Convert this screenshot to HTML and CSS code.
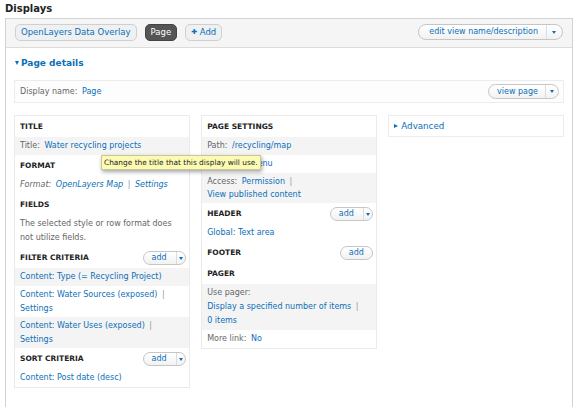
FILE: index.html
```html
<!DOCTYPE html>
<html>
<head>
<meta charset="utf-8">
<link rel="stylesheet" href="styles.css">
</head>
<body>
<h1 class="page-title">Displays</h1>
<div class="panel">
  <div class="tabbar">
    <div class="tabs">
      <a class="tab">OpenLayers Data Overlay</a>
      <a class="tab active">Page</a>
      <a class="tab"><span class="plus">✚</span> Add</a>
    </div>
    <span class="pill pill-lg"><span class="pill-text">edit view name/description</span><span class="pill-caret"><i class="caret"></i></span></span>
  </div>
  <div class="content">
    <div class="details"><i class="tri-down"></i>Page details</div>
    <div class="name-row">
      <span><span class="label">Display name:</span> <a class="link">Page</a></span>
      <span class="pill pill-md"><span class="pill-text">view page</span><span class="pill-caret"><i class="caret"></i></span></span>
    </div>
    <div class="columns">
      <div class="col">
        <div class="sec-head"><span>Title</span></div>
        <div class="row alt"><span class="label">Title:</span> <a class="link">Water recycling projects</a></div>
        <div class="sec-head"><span>Format</span></div>
        <div class="row italic"><span class="label">Format:</span> <a class="link">OpenLayers Map</a> <span class="sep">|</span> <a class="link">Settings</a></div>
        <div class="sec-head"><span>Fields</span></div>
        <div class="row muted">The selected style or row format does not utilize fields.</div>
        <div class="sec-head"><span>Filter criteria</span><span class="pill"><span class="pill-text">add</span><span class="pill-caret"><i class="caret"></i></span></span></div>
        <div class="row alt"><a class="link nw">Content: Type (= Recycling Project)</a></div>
        <div class="row wide"><a class="link nw">Content: Water Sources (exposed)</a> <span class="sep">|</span> <a class="link nw">Settings</a></div>
        <div class="row alt wide"><a class="link nw">Content: Water Uses (exposed)</a> <span class="sep">|</span> <a class="link nw">Settings</a></div>
        <div class="sec-head"><span>Sort criteria</span><span class="pill"><span class="pill-text">add</span><span class="pill-caret"><i class="caret"></i></span></span></div>
        <div class="row"><a class="link nw">Content: Post date (desc)</a></div>
      </div>
      <div class="col">
        <div class="sec-head"><span>Page settings</span></div>
        <div class="row alt"><span class="label">Path:</span> <a class="link">/recycling/map</a></div>
        <div class="row"><span class="label">Menu:</span> <a class="link">No menu</a></div>
        <div class="row alt two"><span class="label">Access:</span> <a class="link nw">Permission</a> <span class="sep">|</span> <a class="link nw">View published content</a></div>
        <div class="sec-head"><span>Header</span><span class="pill"><span class="pill-text">add</span><span class="pill-caret"><i class="caret"></i></span></span></div>
        <div class="row"><a class="link nw">Global: Text area</a></div>
        <div class="sec-head"><span>Footer</span><span class="pill"><span class="pill-text solo">add</span></span></div>
        <div class="sec-head"><span>Pager</span></div>
        <div class="row alt"><span class="label nw">Use pager:</span> <a class="link nw">Display a specified number of items</a> <span class="sep">|</span> <a class="link nw">0 items</a></div>
        <div class="row"><span class="label">More link:</span> <a class="link">No</a></div>
      </div>
      <div class="col">
        <div class="advanced"><i class="tri-right"></i>Advanced</div>
      </div>
    </div>
  </div>
</div>
<div class="tooltip">Change the title that this display will use.</div>
</body>
</html>
```
FILE: styles.css
```css
* { box-sizing: border-box; }
html, body { margin: 0; padding: 0; }
body {
  font-family: "DejaVu Sans", Verdana, sans-serif;
  font-size: 8px;
  color: #333;
  background: #fff;
  padding: 0 0 0 5px;
  position: relative;
  height: 407px;
  overflow: hidden;
}
a { text-decoration: none; }
.link { color: #0b6fb8; }
.nw { white-space: nowrap; }
.page-title {
  font-size: 10px;
  font-weight: bold;
  line-height: 14px;
  margin: 2px 0 2px;
  color: #222;
}
.panel {
  width: 568px;
  height: 389px;
  border: 1px solid #d2d2d2;
  border-bottom: none;
}
.tabbar {
  display: flex;
  justify-content: space-between;
  align-items: flex-start;
  background: #f5f5f5;
  border-bottom: 1px solid #dcdcdc;
  height: 29px;
  padding: 5px 9px 0 9px;
}
.tabs { display: flex; gap: 8px; }
.tab {
  display: block;
  height: 17px;
  line-height: 15px;
  padding: 0 5px;
  font-size: 8.5px;
  border: 1px solid #cdd1d4;
  border-radius: 5px;
  background: #eef0f1;
  color: #0b6fb8;
}
.tab.active {
  background: #555;
  border-color: #444;
  color: #fff;
}
.plus {
  font-size: 7px;
  font-weight: bold;
  position: relative;
  top: -1px;
}
.pill {
  display: inline-flex;
  align-items: stretch;
  height: 14px;
  line-height: 12px;
  border: 1px solid #c6c6c6;
  border-radius: 8px;
  background: linear-gradient(#fff, #f2f2f2);
  color: #0b6fb8;
  font-weight: normal;
  font-size: 8px;
  text-transform: none;
}
.pill-text { padding: 0 9px 0 8px; }
.pill-text.solo { padding: 0 8px; }
.pill-caret {
  width: 9px;
  border-left: 1px solid #dcdcdc;
  display: flex;
  align-items: center;
  justify-content: flex-start;
  padding-left: 2px;
}
.caret {
  display: block;
  width: 0; height: 0;
  border-left: 2.5px solid transparent;
  border-right: 2.5px solid transparent;
  border-top: 3px solid #0b6fb8;
}
.pill-lg { height: 16px; line-height: 14px; }
.pill-lg .pill-text { padding: 0 8px 0 10px; }
.pill-lg .pill-caret { width: 16px; padding-left: 5px; }
.pill-md { height: 15px; line-height: 13px; }
.pill-md .pill-text { padding: 0 7px 0 8px; }
.pill-md .pill-caret { width: 13px; padding-left: 4px; }
.content { padding: 0 8px; }
.details {
  padding-top: 8px;
  line-height: 14px;
  font-size: 9px;
  font-weight: bold;
  color: #0b6fb8;
  display: flex;
  align-items: center;
  padding-left: 1px;
}
.tri-down {
  display: block;
  width: 0; height: 0;
  border-left: 2.5px solid transparent;
  border-right: 2.5px solid transparent;
  border-top: 4px solid #0b6fb8;
  margin-right: 2px;
}
.tri-right {
  display: block;
  width: 0; height: 0;
  border-top: 2.5px solid transparent;
  border-bottom: 2.5px solid transparent;
  border-left: 4px solid #0b6fb8;
  margin-right: 3px;
}
.name-row {
  margin-top: 10px;
  display: flex;
  justify-content: space-between;
  align-items: center;
  border: 1px solid #ececec;
  padding: 3px 4px 3px 5px;
  height: 23px;
  background: #fdfdfd;
}
.label { color: #666; margin-right: 2px; }
.columns {
  margin-top: 12px;
  display: grid;
  grid-template-columns: 1fr 1fr 1fr;
  column-gap: 11.5px;
  align-items: start;
}
.col { border: 1px solid #ebebeb; background: #fff; }
.col:last-child { border: none; }
.sec-head {
  display: flex;
  justify-content: space-between;
  align-items: center;
  padding: 4px 3px 3px 5px;
  line-height: 14px;
  height: 21px;
  font-weight: bold;
  font-size: 7.5px;
  text-transform: uppercase;
  color: #222;
}
.row {
  padding: 2px 5px;
  line-height: 14px;
}
.row.two { line-height: 13.5px; padding: 1.5px 5px; }
.row.wide { line-height: 14px; padding: 1.5px 5px; }
.row.alt { background: #f4f4f4; }
.row.italic { font-style: italic; }
.row.muted { color: #666; }
.sep { color: #999; margin: 0 2px; }
.advanced {
  border: 1px solid #ececec;
  padding: 3px 5px;
  line-height: 14px;
  font-size: 8.7px;
  color: #0b6fb8;
  display: flex;
  align-items: center;
}
.tooltip {
  position: absolute;
  left: 101px;
  top: 155px;
  height: 15px;
  line-height: 13px;
  padding: 0 2px;
  background: #fcfbb3;
  border: 1px solid #c9c79a;
  box-shadow: 1px 2px 4px rgba(0,0,0,0.35);
  color: #222;
  font-size: 7.4px;
  white-space: nowrap;
}
```
